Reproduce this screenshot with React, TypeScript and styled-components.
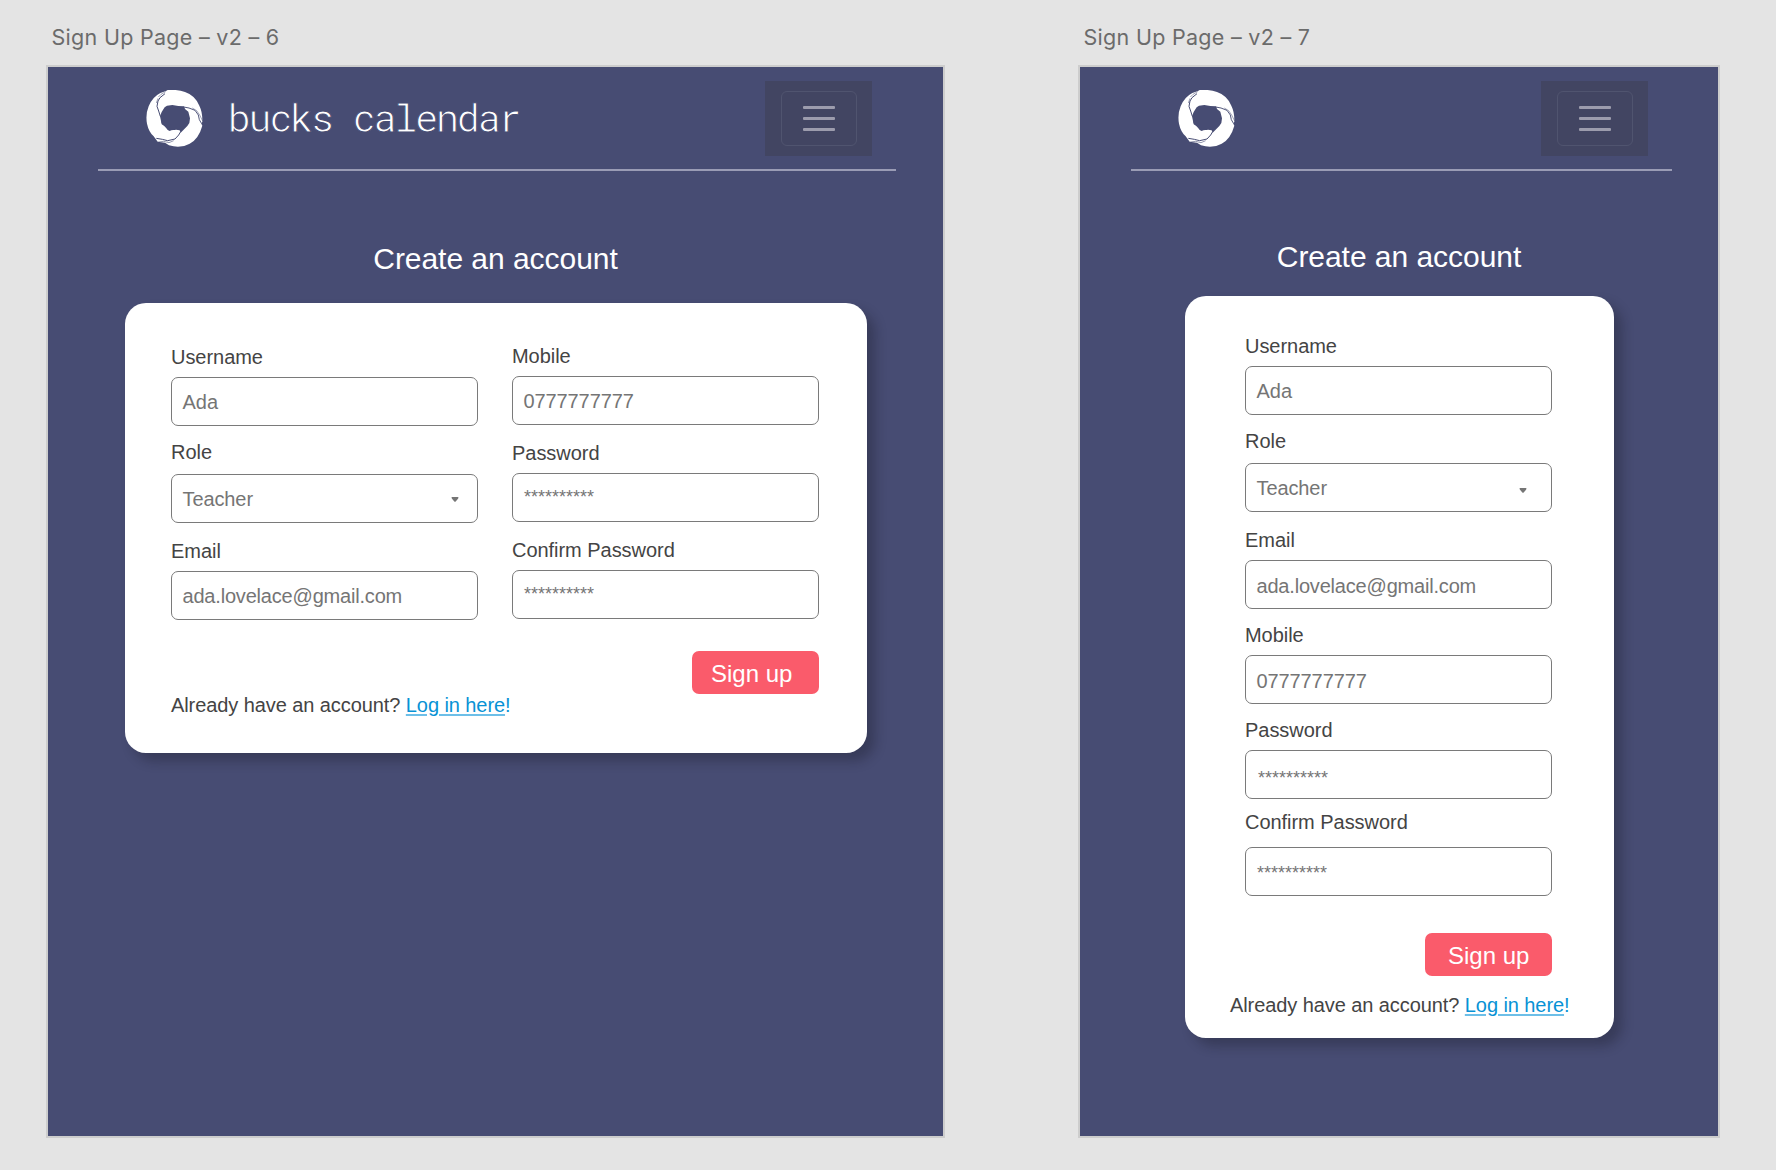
import React from "react";
import styled, { createGlobalStyle } from "styled-components";

const navy = "#474c73";
const sans = `"Liberation Sans", Arial, sans-serif`;

const GlobalStyle = createGlobalStyle`
  * { box-sizing: border-box; }
  body { margin: 0; background: #e4e4e4; font-family: ${sans}; overflow: hidden; }
`;

const Canvas = styled.main`
  display: flex;
  gap: 133px;
  width: 1776px;
  height: 1170px;
  padding: 24px 0 0 46px;
  background: #e4e4e4;
`;

const Artboard = styled.section<{ $width: number }>`
  display: flex;
  flex-direction: column;
  width: ${(p) => p.$width + 4}px;
`;

const ArtboardName = styled.div`
  height: 41px;
  padding-left: 5.5px;
  font: 400 21.5px/27px Inter, sans-serif;
  letter-spacing: 0.29px;
  color: #6b6b6b;
  white-space: nowrap;
`;

const Page = styled.div`
  display: flex;
  flex-direction: column;
  align-items: center;
  height: 1073px;
  border: 2px solid #cdcdcd;
  background: ${navy};
`;

const Header = styled.header<{ $left: number; $right: number }>`
  display: flex;
  align-items: flex-start;
  align-self: stretch;
  height: 104px;
  margin: 0 ${(p) => p.$right}px 0 ${(p) => p.$left}px;
  padding: 14px 24px 0 ${(p) => 98 - p.$left}px;
  border-bottom: 2px solid #9a9cb5;
`;

const Logo = styled.svg`
  width: 57px;
  height: 57px;
  margin-top: 9px;
`;

const Brand = styled.div`
  margin: 14px 0 0 24.5px;
  font: 400 39px/44px "Roboto Mono", "Liberation Mono", monospace;
  letter-spacing: -2.58px;
  color: #fff;
  white-space: nowrap;
  -webkit-text-stroke: 1px ${navy};
`;

const Toggler = styled.div`
  display: flex;
  align-items: center;
  justify-content: center;
  width: 107px;
  height: 75px;
  margin-left: auto;
  background: #424562;
`;

const TogglerFrame = styled.div`
  display: flex;
  flex-direction: column;
  align-items: center;
  justify-content: center;
  gap: 8px;
  width: 76px;
  height: 55px;
  border: 1.5px solid #50546f;
  border-radius: 6px;
`;

const TogglerBar = styled.span`
  width: 32px;
  height: 3px;
  border-radius: 1px;
  background: #9c9cad;
`;

const Title = styled.h1<{ $top: number }>`
  margin: ${(p) => p.$top}px 0 0;
  font: 400 30px/36px ${sans};
  letter-spacing: -0.04px;
  color: #fff;
`;

const Card = styled.form<{ $width: number; $height: number; $top: number }>`
  display: flex;
  flex-direction: column;
  width: ${(p) => p.$width}px;
  height: ${(p) => p.$height}px;
  margin: ${(p) => p.$top}px 0 0;
  border-radius: 21px;
  background: #fff;
  box-shadow: 8px 8px 12px rgba(20, 20, 30, 0.3);
`;

const Columns = styled.div`
  display: flex;
  gap: 34px;
  padding-left: 46px;
`;

const Column = styled.div<{ $indent?: number }>`
  width: 307px;
  margin-left: ${(p) => p.$indent ?? 0}px;
`;

const Label = styled.div<{ $before: number; $gap: number }>`
  margin: ${(p) => p.$before}px 0 ${(p) => p.$gap}px;
  padding-left: 0.5px;
  font: 400 20px/24px ${sans};
  letter-spacing: -0.04px;
  color: #444;
  white-space: nowrap;
`;

const Box = styled.div<{ $pad?: number }>`
  display: flex;
  align-items: flex-start;
  height: 49px;
  padding: ${(p) => p.$pad ?? 12}px 18px 0 11px;
  border: 1px solid #7a7a7a;
  border-radius: 7px;
  font: 400 20px/24px ${sans};
  color: #757575;
`;

const Value = styled.span<{ $tracking?: number }>`
  letter-spacing: ${(p) => p.$tracking ?? 0}px;
`;

const Mask = styled.span<{ $indent?: number }>`
  margin-left: ${(p) => p.$indent ?? 0.5}px;
  font-size: 18px;
`;

const Caret = styled.svg<{ $right: number; $top: number }>`
  width: 8px;
  height: 5px;
  margin: ${(p) => p.$top}px ${(p) => p.$right}px 0 auto;
`;

const Submit = styled.div<{ $before: number; $right: number; $pad: number }>`
  align-self: flex-end;
  width: 127px;
  height: 43px;
  margin: ${(p) => p.$before}px ${(p) => p.$right}px 0 0;
  padding: 8px 0 0 ${(p) => p.$pad}px;
  border-radius: 7px;
  background: #fa5b6b;
  color: #fff;
  font: 400 24px/30px ${sans};
`;

const LoginLine = styled.p<{ $before: number; $left: number }>`
  margin: ${(p) => p.$before}px 0 0 ${(p) => p.$left}px;
  font: 400 20px/24px ${sans};
  letter-spacing: -0.08px;
  color: #444;
  white-space: nowrap;
`;

const Accent = styled.span`
  color: #0792d5;
`;

const LoginLink = styled.a`
  color: #0792d5;
  text-decoration: underline;
  text-decoration-color: #6dbfe8;
  text-decoration-thickness: 2px;
  text-underline-offset: 2px;
`;

type FieldSpec = {
  label: string;
  before: number;
  gap: number;
  value?: string;
  tracking?: number;
  pad?: number;
  indent?: number;
  caret?: { right: number; top: number };
};

const stars = "**********";

function Field({ spec }: { spec: FieldSpec }) {
  return (
    <div>
      <Label $before={spec.before} $gap={spec.gap}>{spec.label}</Label>
      <Box $pad={spec.pad}>
        {spec.value ? (
          <Value $tracking={spec.tracking}>{spec.value}</Value>
        ) : (
          <Mask $indent={spec.indent}>{stars}</Mask>
        )}
        {spec.caret && (
          <Caret $right={spec.caret.right} $top={spec.caret.top} viewBox="0 0 8 5">
            <path d="M.5 .6Q.5 0 1.1 0H6.9Q7.5 0 7.5 .6Q7.5 1.2 7 1.7L4.7 4.5Q4 5.1 3.3 4.5L1 1.7Q.5 1.2 .5 .6Z" fill="#757575" />
          </Caret>
        )}
      </Box>
    </div>
  );
}

function SwirlLogo() {
  return (
    <Logo viewBox="48 45 169 171">
      <path
        fill="#fff"
        fillRule="evenodd"
        d="M107 48L112 45Q144 43 164 51Q194 61 207 92Q217 112 216 140L213 146L216 152Q205 192 178 206Q150 222 116 211L104 203L82 200L70 184Q55 170 50 146Q45 118 55 94Q66 66 90 54ZM89 124L94 111L103 97L110 92L126 90L144 93L161 94L164 102L174 110L179 130L177 144L171 153L151 173L148 166Q138 163 132 165Q124 164 118 168Q111 167 108 160L101 152Q92 150 92 138Z"
      />
      <g fill="none" stroke={navy} strokeLinejoin="round">
        <path strokeWidth="3" d="M90 124L85 108L80 94L83 78L89 68L104 56" />
        <path strokeWidth="1.5" d="M84 66L92 58L106 50M78 84L83 70" />
        <path strokeWidth="2.8" d="M160 96L176 99L194 106L204 120L207 134L214 146" />
        <path strokeWidth="1.5" d="M186 99L199 107L208 120L217 138" />
        <path strokeWidth="3" d="M151 170L145 180L134 192L112 197L96 193L78 190" />
        <path strokeWidth="1.7" d="M130 197L116 203L100 199L84 201" />
      </g>
    </Logo>
  );
}

function PageHeader({ brand, left, right }: { brand?: string; left: number; right: number }) {
  return (
    <Header $left={left} $right={right}>
      <SwirlLogo />
      {brand && <Brand>{brand}</Brand>}
      <Toggler>
        <TogglerFrame>
          <TogglerBar />
          <TogglerBar />
          <TogglerBar />
        </TogglerFrame>
      </Toggler>
    </Header>
  );
}

function LoginPrompt({ before, left }: { before: number; left: number }) {
  return (
    <LoginLine $before={before} $left={left}>
      Already have an account? <LoginLink>Log in here</LoginLink>
      <Accent>!</Accent>
    </LoginLine>
  );
}

const leftFields: FieldSpec[] = [
  { label: "Username", before: 42, gap: 8, value: "Ada" },
  { label: "Role", before: 14, gap: 10, value: "Teacher", tracking: -0.1, caret: { right: 0, top: 10 } },
  { label: "Email", before: 16, gap: 8, value: "ada.lovelace@gmail.com", tracking: -0.19 },
];

const rightFields: FieldSpec[] = [
  { label: "Mobile", before: 41, gap: 8, value: "0777777777", tracking: -0.1 },
  { label: "Password", before: 16, gap: 8, pad: 11 },
  { label: "Confirm Password", before: 16, gap: 8, pad: 11 },
];

const narrowFields: FieldSpec[] = [
  { label: "Username", before: 38, gap: 8, value: "Ada" },
  { label: "Role", before: 14, gap: 10, value: "Teacher", tracking: -0.1, caret: { right: 6, top: 12 } },
  { label: "Email", before: 16, gap: 8, value: "ada.lovelace@gmail.com", tracking: -0.19, pad: 13 },
  { label: "Mobile", before: 14, gap: 8, value: "0777777777", tracking: -0.1, pad: 13 },
  { label: "Password", before: 14, gap: 8, pad: 15, indent: 1.5 },
  { label: "Confirm Password", before: 11, gap: 13, pad: 13 },
];

export default function App() {
  return (
    <>
      <GlobalStyle />
      <Canvas>
        <Artboard $width={895}>
          <ArtboardName>Sign Up Page – v2 – 6</ArtboardName>
          <Page>
            <PageHeader brand="bucks calendar" left={50} right={47} />
            <Title $top={70}>Create an account</Title>
            <Card $width={742} $height={450} $top={26}>
              <Columns>
                <Column>
                  {leftFields.map((f) => <Field key={f.label} spec={f} />)}
                </Column>
                <Column>
                  {rightFields.map((f) => <Field key={f.label} spec={f} />)}
                </Column>
              </Columns>
              <Submit $before={31} $right={48} $pad={19.5}>Sign up</Submit>
              <LoginPrompt before={-1} left={46.5} />
            </Card>
          </Page>
        </Artboard>
        <Artboard $width={638}>
          <ArtboardName>Sign Up Page – v2 – 7</ArtboardName>
          <Page>
            <PageHeader left={51} right={46} />
            <Title $top={68}>Create an account</Title>
            <Card $width={429} $height={742} $top={21}>
              <Column $indent={60}>
                {narrowFields.map((f) => <Field key={f.label} spec={f} />)}
              </Column>
              <Submit $before={37} $right={62} $pad={23.5}>Sign up</Submit>
              <LoginPrompt before={17} left={45.5} />
            </Card>
          </Page>
        </Artboard>
      </Canvas>
    </>
  );
}
